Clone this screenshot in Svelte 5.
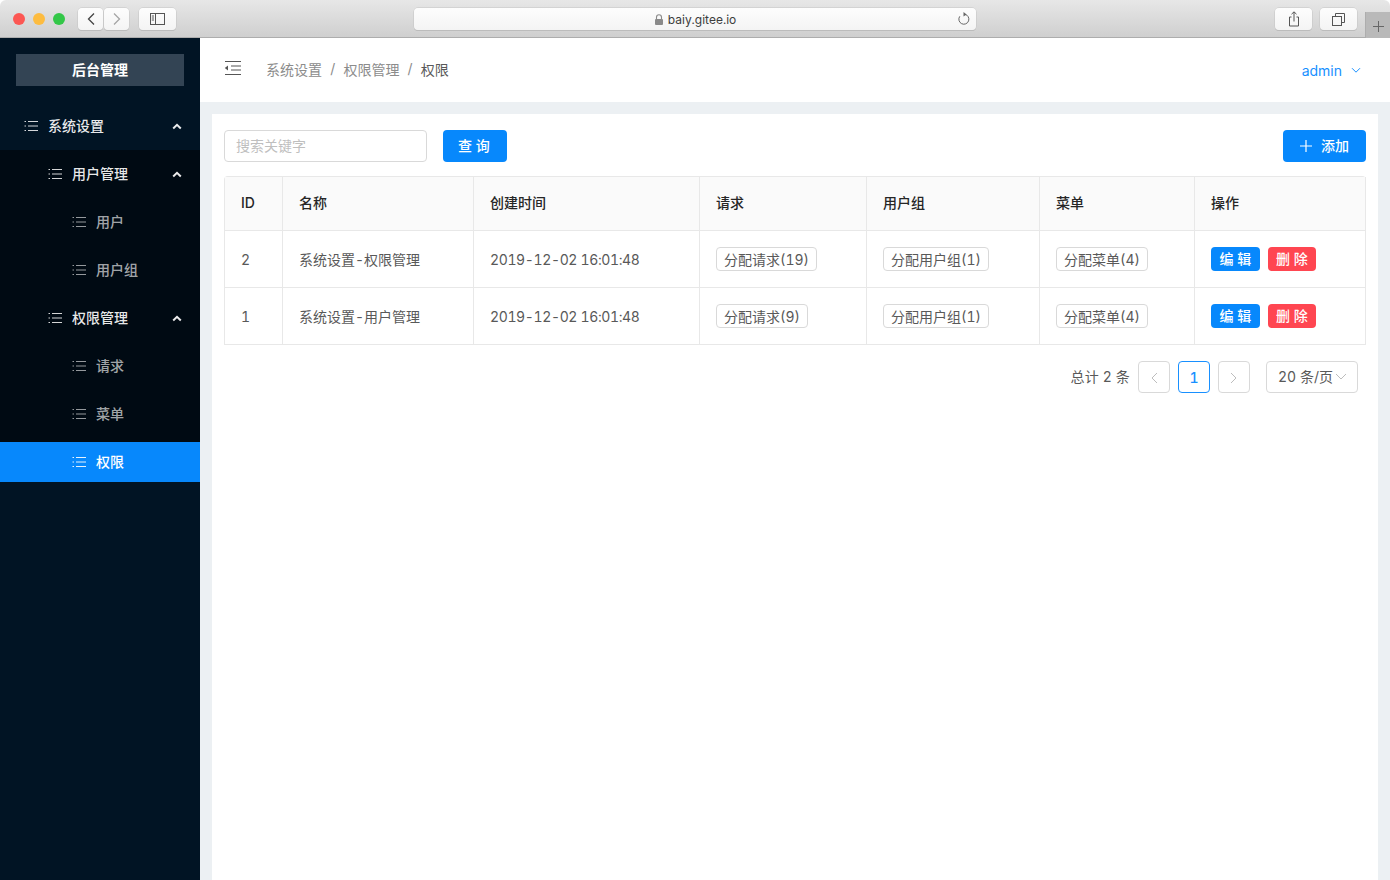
<script>
  const cols = [58, 191, 226, 167, 173, 155, 171];
  const heads = ['ID', '名称', '创建时间', '请求', '用户组', '菜单', '操作'];
  const rows = [
    { id: 2, name: '系统设置-权限管理', time: '2019-12-02 16:01:48', req: '分配请求(19)', grp: '分配用户组(1)', menu: '分配菜单(4)' },
    { id: 1, name: '系统设置-用户管理', time: '2019-12-02 16:01:48', req: '分配请求(9)', grp: '分配用户组(1)', menu: '分配菜单(4)' }
  ];
</script>

{#snippet listIcon()}
  <svg class="list-ic" width="14" height="14" viewBox="0 0 14 14" fill="none" stroke="currentColor">
    <path d="M4 2.500h10M4 7h10M4 11.500h10" />
    <path d="M0.500 2.500h1.500M0.500 7h1.500M0.500 11.500h1.500" />
  </svg>
{/snippet}

{#snippet caret()}
  <svg class="caret" width="10" height="7" viewBox="0 0 10 7" fill="none" stroke="currentColor" stroke-width="2"><path d="M1.200 5.500 5 1.800l3.800 3.700" /></svg>
{/snippet}

<div class="window">
  <header class="chrome">
    <div class="lights">
      <span class="light red"></span><span class="light yellow"></span><span class="light green"></span>
    </div>
    <div class="navs">
      <span class="cbtn nav"><svg width="10" height="14" viewBox="0 0 10 14" fill="none" stroke="#444" stroke-width="1.300"><path d="M8 1.500 2.500 7 8 12.500" /></svg></span>
      <span class="cbtn nav"><svg width="10" height="14" viewBox="0 0 10 14" fill="none" stroke="#a5a5a5" stroke-width="1.300"><path d="M2 1.500 7.500 7 2 12.500" /></svg></span>
    </div>
    <span class="cbtn side"><svg width="15" height="12" viewBox="0 0 15 12" fill="none" stroke="#555"><rect x=".5" y=".5" width="14" height="11" /><path d="M5.500 .5v11M1.800 3h2.200M1.800 5h2.200M1.800 7h2.200" /></svg></span>
    <div class="url">
      <svg width="10" height="11" viewBox="0 0 10 11"><path d="M2.500 5V3.300a2.500 2.500 0 0 1 5 0V5" fill="none" stroke="#8a8a8a" stroke-width="1.100"/><rect x="1" y="5" width="8" height="6" rx="1" fill="#8a8a8a"/></svg>
      <span class="host">baiy.gitee.io</span>
      <svg class="reload" width="14" height="14" viewBox="0 0 14 14" fill="none" stroke="#666"><path d="M7.800 2.300A5 5 0 1 1 2.800 4.300" /><path d="M6.500 0 9.600 2.400 6.500 4.600Z" fill="#666" stroke="none" /></svg>
    </div>
    <span class="cbtn tool first"><svg width="14" height="16" viewBox="0 0 14 16" fill="none" stroke="#555"><path d="M4.500 6H2.500v9h9V6H9.500M7 10.500V1M4.500 3.200 7 .8l2.500 2.400" /></svg></span>
    <span class="cbtn tool"><svg width="13" height="13" viewBox="0 0 13 13" fill="none" stroke="#555"><rect x=".5" y="3.500" width="9" height="9" /><path d="M3.500 3.500v-3h9v9h-3" /></svg></span>
    <span class="plus"><svg width="11" height="11" viewBox="0 0 11 11" stroke="#666"><path d="M5.500 0v11M0 5.500h11" /></svg></span>
  </header>

  <div class="layout">
    <aside class="sider">
      <div class="logo"><span>后台管理</span></div>
      <nav class="menu">
        <div class="item top">{@render listIcon()}<span class="lbl">系统设置</span>{@render caret()}</div>
        <div class="sub">
          <div class="item top lvl2">{@render listIcon()}<span class="lbl">用户管理</span>{@render caret()}</div>
          <div class="item lvl3">{@render listIcon()}<span class="lbl">用户</span></div>
          <div class="item lvl3">{@render listIcon()}<span class="lbl">用户组</span></div>
          <div class="item top lvl2">{@render listIcon()}<span class="lbl">权限管理</span>{@render caret()}</div>
          <div class="item lvl3">{@render listIcon()}<span class="lbl">请求</span></div>
          <div class="item lvl3">{@render listIcon()}<span class="lbl">菜单</span></div>
          <div class="item lvl3 active">{@render listIcon()}<span class="lbl">权限</span></div>
        </div>
      </nav>
    </aside>

    <div class="main">
      <div class="topbar">
        <svg class="fold" width="18" height="14" viewBox="0 0 18 14" fill="none" stroke="#555">
          <path d="M1 .5h16M7 5h10M7 9h10M1 13.500h16" stroke-width="1.100" />
          <path d="M4 4.500v5L.8 7Z" fill="#555" stroke="none" />
        </svg>
        <div class="crumbs">
          <span>系统设置</span><i>/</i><span>权限管理</span><i>/</i><span class="cur">权限</span>
        </div>
        <div class="user">
          <span>admin</span>
          <svg width="10" height="7" viewBox="0 0 10 7" fill="none" stroke="#1890ff"><path d="M1 1.200 5 5.200l4-4" /></svg>
        </div>
      </div>

      <section class="card">
        <div class="toolbar">
          <input class="search" placeholder="搜索关键字" />
          <button class="btn primary query">查 询</button>
          <button class="btn primary add">
            <svg width="12" height="12" viewBox="0 0 12 12" stroke="#fff" stroke-width="1.200"><path d="M6 0v12M0 6h12" /></svg>
            <span>添加</span>
          </button>
        </div>

        <table>
          <colgroup>
            {#each cols as c}<col style:width="{c}px" />{/each}
          </colgroup>
          <thead>
            <tr>{#each heads as h}<th>{h}</th>{/each}</tr>
          </thead>
          <tbody>
            {#each rows as r}
              <tr>
                <td>{r.id}</td>
                <td class="name">{r.name}</td>
                <td class="time">{r.time}</td>
                <td><span class="tagbtn">{r.req}</span></td>
                <td><span class="tagbtn">{r.grp}</span></td>
                <td><span class="tagbtn">{r.menu}</span></td>
                <td>
                  <div class="ops">
                    <span class="mini blue">编 辑</span>
                    <span class="mini red">删 除</span>
                  </div>
                </td>
              </tr>
            {/each}
          </tbody>
        </table>

        <div class="pager">
          <span class="total">总计 2 条</span>
          <span class="pg"><svg width="8" height="12" viewBox="0 0 8 12" fill="none" stroke="#bdbdbd"><path d="M7 1 2 6l5 5" /></svg></span>
          <span class="pg cur-pg">1</span>
          <span class="pg"><svg width="8" height="12" viewBox="0 0 8 12" fill="none" stroke="#bdbdbd"><path d="M1 1l5 5-5 5" /></svg></span>
          <span class="size"><span>20 条/页</span><svg width="12" height="7" viewBox="0 0 12 7" fill="none" stroke="#bdbdbd"><path d="M1 1l5 5 5-5" /></svg></span>
        </div>
      </section>
    </div>
  </div>
</div>

<style>
  :global(body) {
    margin: 0;
    overflow: hidden;
    background: #fff;
  }
  .window {
    width: 1390px;
    height: 880px;
    display: flex;
    flex-direction: column;
    overflow: hidden;
    font-family: Inter, "Noto Sans CJK SC", sans-serif;
    font-size: 14px;
    font-variant-numeric: tabular-nums;
    color: #595959;
  }
  .chrome {
    height: 38px;
    box-sizing: border-box;
    flex: none;
    display: flex;
    align-items: flex-start;
    padding-top: 8px;
    background: linear-gradient(#e7e7e7, #cfcfcf);
    border-bottom: 1px solid #adadad;
    border-radius: 6px 6px 0 0;
  }
  .lights {
    display: flex;
    gap: 8px;
    margin: 5px 0 0 13px;
  }
  .light {
    width: 12px;
    height: 12px;
    border-radius: 50%;
  }
  .light.red { background: #fc5753; }
  .yellow { background: #fdbc40; }
  .green { background: #33c748; }
  .navs {
    display: flex;
    gap: 1px;
    margin-left: 13px;
  }
  .cbtn {
    height: 22px;
    display: flex;
    align-items: center;
    justify-content: center;
    background: linear-gradient(#fdfdfd, #f4f4f4);
    border-radius: 4px;
    box-shadow: 0 0 0 .5px #c4c4c4, 0 1px 0 #b5b5b5;
  }
  .nav { width: 25px; }
  .side { width: 37px; margin-left: 10px; }
  .tool { width: 37px; margin-left: 8px; }
  .tool.first { margin-left: 299px; }
  .url {
    margin-left: 238px;
    width: 562px;
    height: 22px;
    position: relative;
    display: flex;
    align-items: center;
    justify-content: center;
    gap: 4px;
    background: linear-gradient(#fdfdfd, #f4f4f4);
    border-radius: 4px;
    box-shadow: 0 0 0 .5px #c4c4c4, 0 1px 0 #b5b5b5;
  }
  .host {
    font-size: 12px;
    color: #3d3d3d;
  }
  .reload {
    position: absolute;
    right: 5px;
    top: 4px;
  }
  .plus {
    margin: 4px 0 0 8px;
    width: 25px;
    height: 26px;
    display: flex;
    align-items: center;
    justify-content: center;
    background: #b9b9b9;
    border-left: 1px solid #adadad;
    box-sizing: border-box;
    padding-top: 2px;
  }
  .layout {
    flex: 1;
    display: flex;
    min-height: 0;
  }
  .sider {
    width: 200px;
    flex: none;
    background: #011424;
  }
  .logo {
    margin: 16px;
    height: 32px;
    box-sizing: border-box;
    padding-bottom: 2px;
    background: #334454;
    color: #fff;
    font-weight: 600;
    display: flex;
    align-items: center;
    justify-content: center;
  }
  .menu {
    padding-top: 4px;
  }
  .item {
    height: 40px;
    display: flex;
    align-items: center;
    padding-left: 24px;
    padding-right: 18px;
    margin-bottom: 8px;
    color: rgba(255, 255, 255, .65);
    font-weight: 500;
  }
  .item.top {
    color: rgba(255, 255, 255, .92);
  }
  .item.top + .sub {
    margin-top: -4px;
    padding-top: 4px;
  }
  .sub {
    background: #000a13;
  }
  .sub .item:last-child {
    margin-bottom: 0;
  }
  .lvl2 { padding-left: 48px; }
  .lvl3 { padding-left: 72px; }
  .active {
    background: #0788fc;
    color: #fff;
  }
  .list-ic {
    flex: none;
    margin-right: 10px;
    opacity: .9;
  }
  .lbl {
    flex: 1;
    padding-bottom: 2px;
  }
  .caret {
    flex: none;
  }
  .main {
    flex: 1;
    min-width: 0;
    display: flex;
    flex-direction: column;
    background: #ecf0f3;
  }
  .topbar {
    height: 64px;
    flex: none;
    display: flex;
    align-items: center;
    background: #fff;
    padding: 0 29px 0 24px;
  }
  .fold {
    margin-top: -4px;
  }
  .crumbs {
    margin-left: 24px;
    padding-bottom: 2px;
    display: flex;
    color: #8c8c8c;
  }
  .crumbs i {
    font-style: normal;
    margin: 1px 8.200px 0;
  }
  .cur {
    color: #595959;
  }
  .user {
    margin-left: auto;
    display: flex;
    align-items: center;
    gap: 9px;
    color: #1890ff;
  }
  .card {
    flex: 1;
    margin: 12px 12px 0;
    padding: 16px 12px 0;
    background: #fff;
  }
  .toolbar {
    display: flex;
    align-items: center;
    margin-bottom: 14px;
  }
  .search {
    width: 203px;
    height: 32px;
    box-sizing: border-box;
    padding: 0 11px 2px;
    border: 1px solid #d9d9d9;
    border-radius: 4px;
    outline: none;
    font: inherit;
    color: #595959;
  }
  .search::placeholder {
    color: #bfbfbf;
  }
  .btn {
    height: 32px;
    border: 0;
    border-radius: 4px;
    padding: 0 2px 2px 0;
    font: inherit;
    font-weight: 500;
    cursor: pointer;
  }
  .primary {
    background: #0788fc;
    color: #fff;
  }
  .query {
    width: 64px;
    margin-left: 16px;
  }
  .add {
    margin-left: auto;
    width: 83px;
    display: flex;
    align-items: center;
    justify-content: center;
    gap: 9px;
    padding: 0;
  }
  .add span {
    padding-bottom: 2px;
  }
  table {
    width: 1142px;
    table-layout: fixed;
    border-collapse: separate;
    border-spacing: 0;
    border: 1px solid #e8e8e8;
    border-width: 1px 0 0 1px;
    border-radius: 4px 4px 0 0;
  }
  th, td {
    border-right: 1px solid #e8e8e8;
    border-bottom: 1px solid #e8e8e8;
    padding: 0 16px;
    text-align: left;
    white-space: nowrap;
  }
  th {
    box-sizing: border-box;
    height: 54px;
    padding-bottom: 3px;
    background: #fafafa;
    color: #262626;
    font-weight: 500;
  }
  td {
    height: 57px;
    box-sizing: border-box;
  }
  .time {
    letter-spacing: -.37px;
  }
  .tagbtn {
    display: inline-flex;
    align-items: center;
    height: 24px;
    box-sizing: border-box;
    padding: 0 7px 1px;
    border: 1px solid #d9d9d9;
    border-radius: 4px;
  }
  .ops {
    display: flex;
    gap: 8px;
  }
  .mini {
    height: 24px;
    width: 49px;
    box-sizing: border-box;
    padding-bottom: 2px;
    display: flex;
    align-items: center;
    justify-content: center;
    border-radius: 4px;
    color: #fff;
    font-weight: 500;
  }
  .mini.red { width: 48px; background: #ff4651; }
  .blue { background: #0788fc; }
  .pager {
    display: flex;
    align-items: center;
    justify-content: flex-end;
    margin-top: 16px;
    padding-right: 8px;
  }
  .total {
    margin-right: 8px;
    padding-bottom: 2px;
    letter-spacing: .15px;
  }
  .pg {
    width: 32px;
    height: 32px;
    box-sizing: border-box;
    margin-right: 8px;
    display: flex;
    align-items: center;
    justify-content: center;
    border: 1px solid #d9d9d9;
    border-radius: 4px;
    font-weight: 500;
  }
  .pg svg {
    margin-top: 2px;
  }
  .cur-pg {
    border-color: #1890ff;
    color: #1890ff;
  }
  .size {
    width: 92px;
    height: 32px;
    box-sizing: border-box;
    margin-left: 8px;
    padding: 0 0 1px 11px;
    display: flex;
    align-items: center;
    gap: 2px;
    border: 1px solid #d9d9d9;
    border-radius: 4px;
  }
  .size span {
    padding-bottom: 1px;
  }
</style>
